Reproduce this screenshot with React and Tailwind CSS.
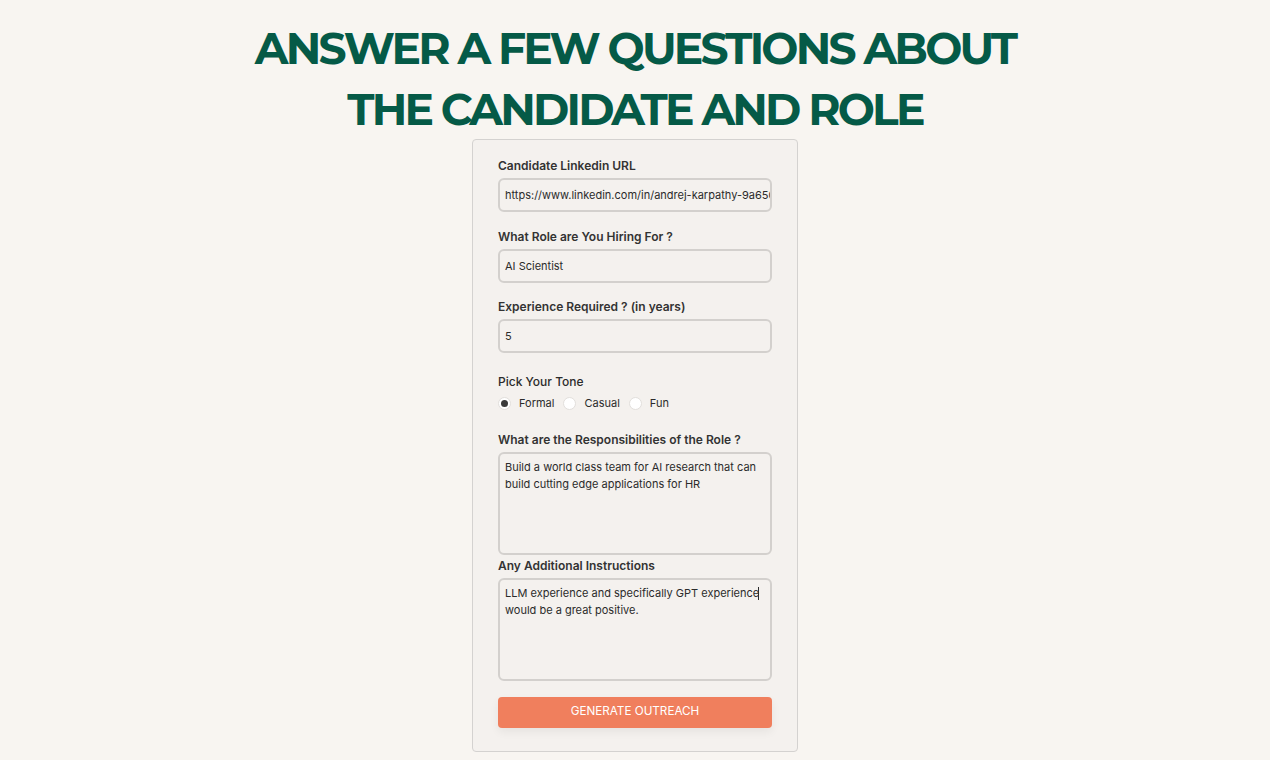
import { useState } from "react";

// one labelled text box
function Field({ label, value, mt = "mt-[17px]" }) {
  return (
    <div className={mt}>
      <p className="text-[12px] font-semibold text-[#333] leading-4">{label}</p>
      <div className="mt-[4px] h-[34px] rounded-[6px] border-2 border-[#d3d0cd] bg-[#f4f1ee] px-[5px] flex items-center overflow-hidden">
        <span className="text-[11px] text-[#2b2b2b] whitespace-nowrap">{value}</span>
      </div>
    </div>
  );
}

function Area({ label, lines, mt, cursor }) {
  return (
    <div className={mt}>
      <p className="text-[12px] font-semibold text-[#333] leading-4">{label}</p>
      <div className="mt-[4px] h-[103px] rounded-[6px] border-2 border-[#d3d0cd] bg-[#f4f1ee] px-[5px] pt-[5px]">
        {lines.map((l, i) => (
          <p key={i} className="text-[11px] leading-[17px] text-[#2b2b2b] whitespace-nowrap">
            {l}
            {cursor && i === 0 && <span className="inline-block w-px h-[13px] bg-[#2b2b2b] align-middle -ml-px" />}
          </p>
        ))}
      </div>
    </div>
  );
}

function Radio({ label, checked }) {
  return (
    <div className="flex items-center gap-[8px] mr-[9px]">
      <span className="w-[13px] h-[13px] rounded-full bg-white border border-[#e2dfdc] flex items-center justify-center">
        {checked && <span className="w-[7px] h-[7px] rounded-full bg-[#3a3a3a]" />}
      </span>
      <span className="text-[11px] text-[#2b2b2b]">{label}</span>
    </div>
  );
}

export default function App() {
  const [tone] = useState("Formal");

  return (
    <div className="min-h-[760px] bg-[#f8f5f1] flex flex-col items-center font-['Inter',sans-serif]">
      {/* heading */}
      <h1 className="mt-[18px] text-center text-[#055a47] font-['Montserrat','Inter',sans-serif] font-bold text-[44px] leading-[61px] tracking-[-2.8px]">
        ANSWER A FEW QUESTIONS ABOUT<br />THE CANDIDATE AND ROLE
      </h1>

      {/* form card */}
      <div className="mt-[-1px] w-[326px] border-[1.5px] border-[#d4d2d0] rounded-[4px] bg-[#f4f1ee] px-[25px] pt-[18px] pb-[23px]">
        <Field mt="" label="Candidate Linkedin URL" value="https://www.linkedin.com/in/andrej-karpathy-9a650" />
        <Field label="What Role are You Hiring For ?" value="AI Scientist" />
        <Field mt="mt-[16px]" label="Experience Required ? (in years)" value="5" />

        <div className="mt-[21px]">
          <p className="text-[12px] font-medium text-[#2b2b2b] leading-4">Pick Your Tone</p>
          <div className="flex mt-[5px]">
            {["Formal", "Casual", "Fun"].map((t) => (
              <Radio key={t} label={t} checked={tone === t} />
            ))}
          </div>
        </div>

        <Area mt="mt-[20px]" label="What are the Responsibilities of the Role ?"
          lines={["Build a world class team for AI research that can", "build cutting edge applications for HR"]} />
        <Area mt="mt-[3px]" label="Any Additional Instructions" cursor
          lines={["LLM experience and specifically GPT experience", "would be a great positive."]} />

        <button className="mt-[16px] w-full h-[31px] rounded-[4px] bg-[#f07f5d] text-white text-[11.7px] shadow-[0_4px_10px_rgba(0,0,0,0.06)]">
          GENERATE OUTREACH
        </button>
      </div>
    </div>
  );
}
